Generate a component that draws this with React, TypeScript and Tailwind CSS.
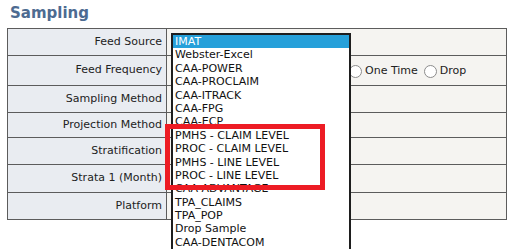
import React from "react";

// ─── Data ─────────────────────────────────────────────────────────────────────

type Row = { label: string; h: string; radios?: boolean };

const rows: Row[] = [
  { label: "Feed Source", h: "h-[27px]" },
  { label: "Feed Frequency", h: "h-[30px]", radios: true },
  { label: "Sampling Method", h: "h-[27px]" },
  { label: "Projection Method", h: "h-[25px]" },
  { label: "Stratification", h: "h-[27px]" },
  { label: "Strata 1 (Month)", h: "h-[28px]" },
  { label: "Platform", h: "h-[27px]" },
];

const feedSources = [
  "IMAT",
  "Webster-Excel",
  "CAA-POWER",
  "CAA-PROCLAIM",
  "CAA-ITRACK",
  "CAA-FPG",
  "CAA-ECP",
  "PMHS - CLAIM LEVEL",
  "PROC - CLAIM LEVEL",
  "PMHS - LINE LEVEL",
  "PROC - LINE LEVEL",
  "CAA-ADVANTAGE",
  "TPA_CLAIMS",
  "TPA_POP",
  "Drop Sample",
  "CAA-DENTACOM",
];

// ─── Radio ────────────────────────────────────────────────────────────────────

const Radio = ({ label }: { label: string }) => (
  <label className="flex items-center gap-[3px]">
    <span className="block h-[13px] w-[13px] rounded-full border border-[#8c8c8c] bg-white" />
    <span>{label}</span>
  </label>
);

// ─── Main ─────────────────────────────────────────────────────────────────────

export default function App() {
  return (
    <div className="relative h-[249px] w-[518px] overflow-hidden bg-white pl-[7px] pr-[11px] font-['DejaVu_Sans',Verdana,sans-serif] text-[11px] text-[#222]">
      {/* Header */}
      <div className="h-[28px] pl-[3px] pt-[3px] text-[15px] font-bold leading-[20px] text-[#4d6b91]">
        Sampling
      </div>

      {/* Form table */}
      <div className="border-b border-l border-r border-[#5c5c5c]">
        {rows.map((row) => (
          <div key={row.label} className={`flex border-t border-[#5c5c5c] ${row.h}`}>
            <div className="flex w-[159px] shrink-0 items-center justify-end border-r border-[#5c5c5c] bg-[#e9ecf1] pr-[4px]">
              {row.label}
            </div>
            <div className="flex flex-1 items-center bg-[#f5f4f1]">
              {row.radios && (
                <div className="flex items-center gap-[6px] pl-[182px] pt-[1px]">
                  <Radio label="One Time" />
                  <Radio label="Drop" />
                </div>
              )}
            </div>
          </div>
        ))}
      </div>

      {/* Open dropdown list */}
      <div className="absolute left-[171px] top-[33px] h-[240px] w-[180px] border-2 border-[#1e1e1e] bg-white text-[#111]">
        {feedSources.map((s, i) => (
          <div
            key={s}
            className={`h-[13.4px] whitespace-nowrap pl-[2px] leading-[13.4px] ${
              i === 0 ? "bg-[#26a0da] text-white" : ""
            }`}
          >
            {s}
          </div>
        ))}
      </div>

      {/* Highlight annotation */}
      <div className="absolute left-[165px] top-[124px] h-[66px] w-[160px] border-[5px] border-[#ed1c24]" />
    </div>
  );
}
